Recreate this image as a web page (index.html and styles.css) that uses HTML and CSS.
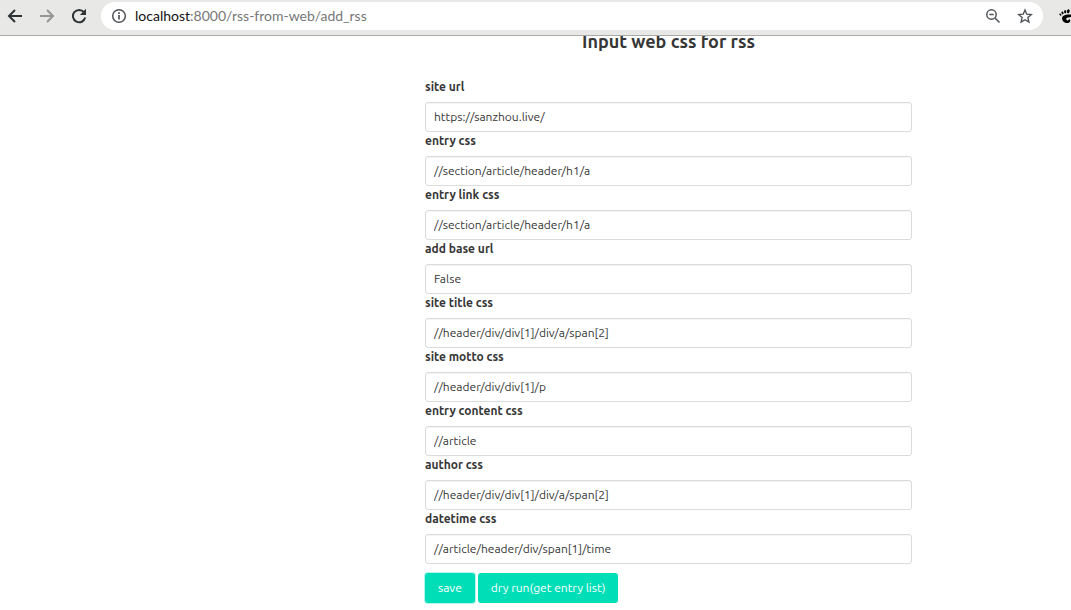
FILE: index.html
```html
<!DOCTYPE html>
<html lang="en">
<head>
  <meta charset="utf-8">
  <meta name="viewport" content="width=device-width, initial-scale=1">
  <title>Input web css for rss</title>
  <link rel="stylesheet" href="styles.css">
</head>
<body>
  <header class="toolbar">
    <button class="tool" type="button" aria-label="Back">
      <svg viewBox="0 0 16 16"><path d="M15 8H2M8 2L2 8l6 6" fill="none" stroke="#2e3436" stroke-width="2"/></svg>
    </button>
    <button class="tool" type="button" aria-label="Forward">
      <svg viewBox="0 0 16 16"><path d="M1 8h13M8 2l6 6-6 6" fill="none" stroke="#949796" stroke-width="2"/></svg>
    </button>
    <button class="tool" type="button" aria-label="Reload">
      <svg viewBox="0 0 16 16"><path d="M13 4.2A6.2 6.2 0 1 0 14.2 9.600" fill="none" stroke="#2e3436" stroke-width="2"/><path d="M15 .8V7H8.800z" fill="#2e3436"/></svg>
    </button>
    <div class="address">
      <button class="tool small" type="button" aria-label="Site information">
        <svg viewBox="0 0 16 16"><circle cx="8" cy="8" r="6.300" fill="none" stroke="#505356" stroke-width="1.500"/><path d="M8 7v4.500M8 4.200v1.800" stroke="#505356" stroke-width="1.700"/></svg>
      </button>
      <div class="url" role="textbox" aria-label="Address" contenteditable="true" spellcheck="false"><span class="host">localhost</span>:8000/rss-from-web/add_rss</div>
      <button class="tool small" type="button" aria-label="Zoom">
        <svg viewBox="0 0 16 16"><circle cx="6.500" cy="6.500" r="4.700" fill="none" stroke="#505356" stroke-width="1.500"/><path d="M10 10l4.500 4.500M4.300 6.500h4.400" stroke="#505356" stroke-width="1.500"/></svg>
      </button>
      <button class="tool small" type="button" aria-label="Bookmark">
        <svg viewBox="0 0 16 16"><path d="M8 2l1.800 4.200 4.500.4-3.400 3 1 4.400L8 11.700 4.100 14l1-4.400-3.400-3 4.500-.4z" fill="none" stroke="#505356" stroke-width="1.400"/></svg>
      </button>
    </div>
    <button class="tool extension" type="button" aria-label="Extension">
      <svg viewBox="0 0 16 16"><path d="M13 3.200C15 0 18 1 17 3.500S12 6.500 13 3.200z"/><ellipse cx="9.300" cy="3.300" rx="1.400" ry="2.100" transform="rotate(12 9.300 3.300)"/><ellipse cx="6.200" cy="3.700" rx="1.100" ry="1.700"/><ellipse cx="3.500" cy="4.900" rx="1" ry="1.500" transform="rotate(-20 3.500 4.900)"/><ellipse cx="1.400" cy="6.600" rx=".8" ry="1.300" transform="rotate(-35 1.400 6.600)"/><path d="M14 7C9 5.500 3 7 3 10.200 3 13 6 15.500 8.800 15c2.600-.5 3-3 2-3.600-1-.5-1.300 1.300-2.500 1-1.400-.4-1.500-2-.2-2.600C10 9 14.500 9.300 14 7z"/></svg>
    </button>
  </header>
  <main class="page">
    <form class="form">
      <h1 class="title">Input web css for rss</h1>
      <div class="field"><label class="label" for="site-url">site url</label><input class="input" id="site-url" type="text" value="https://sanzhou.live/"></div>
      <div class="field"><label class="label" for="entry">entry css</label><input class="input" id="entry" type="text" value="//section/article/header/h1/a"></div>
      <div class="field"><label class="label" for="entry-link">entry link css</label><input class="input" id="entry-link" type="text" value="//section/article/header/h1/a"></div>
      <div class="field"><label class="label" for="base-url">add base url</label><input class="input" id="base-url" type="text" value="False"></div>
      <div class="field"><label class="label" for="site-title">site title css</label><input class="input" id="site-title" type="text" value="//header/div/div[1]/div/a/span[2]"></div>
      <div class="field"><label class="label" for="site-motto">site motto css</label><input class="input" id="site-motto" type="text" value="//header/div/div[1]/p"></div>
      <div class="field"><label class="label" for="content">entry content css</label><input class="input" id="content" type="text" value="//article"></div>
      <div class="field"><label class="label" for="author">author css</label><input class="input" id="author" type="text" value="//header/div/div[1]/div/a/span[2]"></div>
      <div class="field"><label class="label" for="datetime">datetime css</label><input class="input" id="datetime" type="text" value="//article/header/div/span[1]/time"></div>
      <div class="actions">
        <button class="button is-active" type="button">save</button>
        <button class="button" type="button">dry run(get entry list)</button>
      </div>
    </form>
  </main>
</body>
</html>
```

FILE: styles.css
```css
* { box-sizing: border-box; }

body {
  margin: 0;
  background: #fff;
  color: #363636;
  font-family: Ubuntu, "Noto Sans", sans-serif;
  font-size: 12px;
  overflow: hidden;
}

.toolbar {
  position: relative;
  display: flex;
  align-items: center;
  gap: 16px;
  height: 36px;
  padding: 0 0 4px 7px;
  overflow: hidden;
  background: #e8e8e7;
  border-bottom: 1px solid #a9a9a8;
}

.tool {
  flex: none;
  width: 16px;
  height: 16px;
  padding: 0;
  border: 0;
  background: none;
}

.tool svg { display: block; width: 100%; height: 100%; }

.address {
  flex: 1;
  display: flex;
  align-items: center;
  gap: 16px;
  height: 28px;
  margin-left: -2px;
  padding: 0 10px;
  border-radius: 14px;
  background: #fff;
}

.url {
  flex: 1;
  margin-left: -8px;
  color: #777;
  font-family: Lato, sans-serif;
  font-size: 14px;
  line-height: 20px;
  white-space: nowrap;
}

.host { color: #111; }

.extension { margin-right: -4px; }

.page {
  display: grid;
  grid-template-columns: 425fr 487fr 159fr;
  overflow: hidden;
}

.form { grid-column: 2; }

.title {
  margin: -6px 0 26px;
  font-size: 18px;
  line-height: 22px;
  font-weight: 700;
  text-align: center;
}

.field { display: grid; gap: 6px; }

.label {
  font-size: 12px;
  line-height: 18px;
  font-weight: 700;
}

.input {
  width: 100%;
  height: 30px;
  padding: 0 8px 1px;
  border: 1px solid #dbdbdb;
  border-radius: 3px;
  background: #fff;
  box-shadow: inset 0 1px 1px #f4f4f4;
  color: #363636;
  font: inherit;
}

.actions { display: flex; gap: 3px; padding: 9px 0 7px; }

.button {
  height: 30px;
  padding: 0 13px 1px;
  border: 0;
  border-radius: 3px;
  background: #00deb8;
  color: #fff;
  font: inherit;
}

.is-active { box-shadow: 0 0 0 1px #b3f5ea; }
```
